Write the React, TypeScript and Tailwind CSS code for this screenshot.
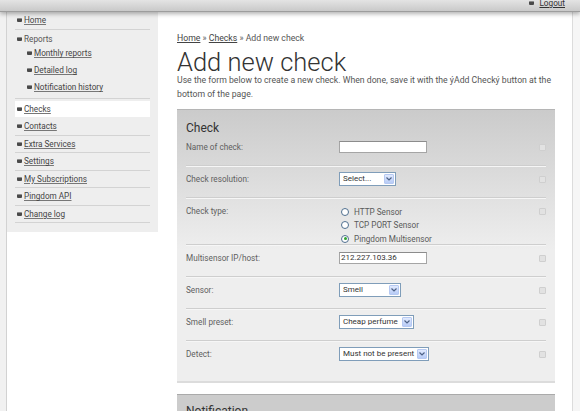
import React from "react";

const Bullet = () => (
  <span className="inline-block w-[5px] h-[4px] rounded-[1px] bg-[#4a4a4a] border-t border-t-[#8a8a8a] mr-[2px] shrink-0" />
);

const NavLink = ({ label, sub = false }: { label: string; sub?: boolean }) => (
  <span className={`flex items-center ${sub ? "pl-[12px]" : "pl-[2px]"}`}>
    <Bullet />
    <span className="underline text-[#444] decoration-[#777]">{label}</span>
  </span>
);

const RowIcon = () => (
  <span className="w-[7px] h-[7px] bg-[#e2e2e2] border border-[#cfcfcf] rounded-[1px] shrink-0 mt-[3px]" />
);

const TextInput = ({ value = "", width }: { value?: string; width: string }) => (
  <div className={`${width} h-[12px] bg-white border border-[#a5a5a5] border-t-[#8c8c8c] text-[8px] leading-[10px] pl-[1px] text-[#333]`}>
    {value}
  </div>
);

const Select = ({ value, width }: { value: string; width: string }) => (
  <div className={`${width} h-[14px] -my-[1px] bg-white border border-[#7f9db9] flex items-center justify-between pl-[3px] pr-[1px]`}>
    <span className="text-[8px] leading-none text-[#333] whitespace-nowrap">{value}</span>
    <span className="w-[10px] h-[10px] bg-gradient-to-b from-[#e1eafe] to-[#b7cbf6] border border-[#b6c9f2] rounded-[1px] flex items-center justify-center">
      <svg width="6" height="4" viewBox="0 0 6 4">
        <path d="M0.5 0.5 L3 3 L5.5 0.5" fill="none" stroke="#4d6185" strokeWidth="1.2" />
      </svg>
    </span>
  </div>
);

const Radio = ({ label, checked = false }: { label: string; checked?: boolean }) => (
  <div className="flex items-center h-[13.5px] pl-[2px]">
    <span className="w-[8px] h-[8px] rounded-full border border-[#4f6f8f] bg-white flex items-center justify-center mr-[5px]">
      {checked && <span className="w-[3px] h-[3px] rounded-full bg-[#2ea32e]" />}
    </span>
    <span className="text-[#5a5a5a]">{label}</span>
  </div>
);

const FormRow = ({
  label,
  children,
  pb = "pb-[12px]",
  last = false,
}: {
  label: string;
  children: React.ReactNode;
  pb?: string;
  last?: boolean;
}) => (
  <div
    className={`flex items-start pt-[7px] ${pb} ${
      last ? "" : "border-b border-b-[#cecece] shadow-[0_1px_0_#f6f6f6]"
    }`}
  >
    <div className="w-[153px] leading-[12px] text-[#5f5f5f]">{label}</div>
    <div className="flex-1">{children}</div>
    <RowIcon />
  </div>
);

export default function App() {
  return (
    <div className="w-[580px] h-[411px] overflow-hidden bg-white font-['Roboto','Liberation_Sans',Arial,sans-serif] text-[8.2px] flex flex-col">
      {/* top bar */}
      <div className="relative z-10 h-[12px] shrink-0 bg-gradient-to-b from-[#e4e4e4] to-[#c9c9c9] border-b border-b-[#9d9d9d] shadow-[0_2px_4px_rgba(0,0,0,0.3)] flex justify-end pr-[15px]">
        <span className="flex items-center -mt-[3px] h-[12px]">
          <Bullet />
          <span className="underline text-[#333] ml-[3px]">Logout</span>
        </span>
      </div>

      <div className="flex flex-1">
        {/* left gutter */}
        <div className="w-[7px] bg-[#f1f1f1] border-r border-r-[#d2d2d2]" />

        {/* sidebar */}
        <div className="w-[151px] flex flex-col">
          <div className="bg-[#eeeeee] px-[8px] pb-[9px]">
            <div className="h-[18px] flex items-center border-b border-b-[#d3d3d3]">
              <NavLink label="Home" />
            </div>
            <div className="border-b border-b-[#d3d3d3] pb-[2px]">
              <div className="h-[15px] pt-[4px] leading-[10px]">
                <span className="flex items-center pl-[2px]">
                  <Bullet />
                  <span className="text-[#555]">Reports</span>
                </span>
              </div>
              <div className="h-[17px] flex items-center">
                <NavLink label="Monthly reports" sub />
              </div>
              <div className="h-[17px] flex items-center">
                <NavLink label="Detailed log" sub />
              </div>
              <div className="h-[17px] flex items-center">
                <NavLink label="Notification history" sub />
              </div>
            </div>
            <div className="h-[19px] pt-[2px] pb-[1px]">
              <div className="h-[16px] bg-white flex items-center">
                <NavLink label="Checks" />
              </div>
            </div>
            {[
              ["Contacts", "h-[18px]"],
              ["Extra Services", "h-[17px]"],
              ["Settings", "h-[18px]"],
              ["My Subscriptions", "h-[17px]"],
              ["Pingdom API", "h-[18px]"],
              ["Change log", "h-[17px]"],
            ].map(([l, h]) => (
              <div key={l} className={`${h} flex items-center border-b border-b-[#d3d3d3]`}>
                <NavLink label={l} />
              </div>
            ))}
          </div>
        </div>

        {/* main */}
        <div className="w-[414px] pl-[19px] pr-[17px] pt-[20px] text-[#555]">
          <div className="text-[8.7px] leading-[12px] text-[#555]">
            <span className="underline text-[#444]">Home</span> »{" "}
            <span className="underline text-[#444]">Checks</span> » Add new check
          </div>
          <h1 className="text-[25.5px] leading-[22px] mt-[7px] text-[#333] font-light">Add new check</h1>
          <p className="text-[8.7px] leading-[14px] text-[#555] whitespace-nowrap">
            Use the form below to create a new check. When done, save it with the ýAdd Checký button at the
            <br />
            bottom of the page.
          </p>

          {/* Check panel */}
          <div className="mt-[8px] border-t border-t-[#b5b5b5] border-b-2 border-b-[#dcdcdc] bg-[linear-gradient(#cbcbcb,#eeeeee_140px,#eeeeee)] px-[9px] pt-[12px]">
            <div className="text-[12px] leading-[12px] text-[#333]">Check</div>
            <FormRow label="Name of check:">
              <TextInput width="w-[88px]" />
            </FormRow>
            <FormRow label="Check resolution:">
              <Select value="Select..." width="w-[57px]" />
            </FormRow>
            <FormRow label="Check type:" pb="pb-[0px]">
              <div className="-mb-[1.5px]">
                <Radio label="HTTP Sensor" />
                <Radio label="TCP PORT Sensor" />
                <Radio label="Pingdom Multisensor" checked />
              </div>
            </FormRow>
            <FormRow label="Multisensor IP/host:">
              <TextInput value="212.227.103.36" width="w-[88px]" />
            </FormRow>
            <FormRow label="Sensor:">
              <Select value="Smell" width="w-[62px]" />
            </FormRow>
            <FormRow label="Smell preset:">
              <Select value="Cheap perfume" width="w-[75px]" />
            </FormRow>
            <FormRow label="Detect:" pb="pb-[21px]" last>
              <Select value="Must not be present" width="w-[90px]" />
            </FormRow>
          </div>

          {/* Notification panel */}
          <div className="mt-[11px] border-t border-t-[#aaaaaa] bg-[#cccccc] px-[9px] pt-[10px] h-[40px]">
            <div className="text-[12px] leading-[12px] text-[#333]">Notification</div>
          </div>
        </div>

        {/* right gutter */}
        <div className="flex-1 border-l border-l-[#dcdcdc] bg-[#f6f6f6]" />
      </div>
    </div>
  );
}
